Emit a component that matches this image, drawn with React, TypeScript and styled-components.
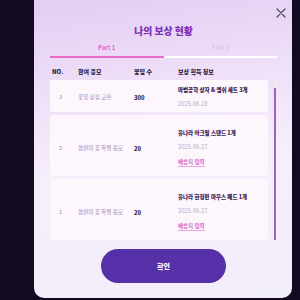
import { useEffect, useRef, useState } from 'react';
import styled, { createGlobalStyle } from 'styled-components';

const GlobalStyle = createGlobalStyle`
    * { box-sizing: border-box; }
    body {
        margin: 0;
        background: #120a21;
        font-family: "Noto Sans CJK KR", "Noto Sans", sans-serif;
    }
`;

const Page = styled.div`
    width: 300px;
    height: 300px;
    overflow: hidden;
`;

const Modal = styled.div`
    position: relative;
    width: 258px;
    height: 298px;
    margin-left: 34px;
    padding: 0 15px 0 16px;
    display: flex;
    flex-direction: column;
    border-radius: 0 0 10px 10px;
    background: linear-gradient(172deg, #e3cdf4 0%, #efe0f8 30%, #f7eefb 55%, #f2eef9 100%);
`;

const CloseButton = styled.button`
    position: absolute;
    top: 7px;
    right: 6px;
    width: 11px;
    height: 11px;
    padding: 0;
    border: none;
    background: none;
    display: flex;
    align-items: center;
    justify-content: center;
`;

const Title = styled.h2`
    margin: 26px 0 0;
    font-size: 9.8px;
    line-height: 10px;
    font-weight: 900;
    text-align: center;
    color: #7a30b6;
`;

const Tabs = styled.div`
    margin-top: 8px;
    display: flex;
`;

const Tab = styled.div<{ $active?: boolean }>`
    flex: 1;
    padding-bottom: 4px;
    font-size: 6px;
    line-height: 8px;
    font-weight: 700;
    text-align: center;
    color: ${(p) => (p.$active ? '#e063c4' : '#dcc4ee')};
    border-bottom: 2px solid ${(p) => (p.$active ? '#e86cc8' : '#ffffff')};
`;

const Grid = styled.div`
    display: grid;
    grid-template-columns: 28px 56px 44px 1fr;
    align-items: center;
`;

const HeaderRow = styled(Grid)`
    margin-top: 10px;
    font-size: 6px;
    line-height: 8px;
    font-weight: 900;
    color: #2d1e3e;
`;

const HeaderCell = styled.div<{ $first?: boolean }>`
    padding-left: ${(p) => (p.$first ? '2px' : '0')};
`;

const ListArea = styled.div`
    margin-top: 4px;
    height: 160px;
    display: flex;
    gap: 6px;
`;

const List = styled.div`
    width: 218px;
    height: 100%;
    overflow-y: scroll;
    scrollbar-width: none;
    display: flex;
    flex-direction: column;
    gap: 3px;

    &::-webkit-scrollbar {
        display: none;
    }
`;

const ScrollTrack = styled.div`
    position: relative;
    width: 2px;
    height: 100%;
    background: #f4ecdf;
`;

const ScrollThumb = styled.div`
    position: absolute;
    left: 0;
    width: 2px;
    background: #9a63c6;
`;

const Card = styled(Grid)<{ $tall?: boolean }>`
    flex-shrink: 0;
    padding: 14px 0 ${(p) => (p.$tall ? '9px' : '4px')};
    border-radius: 4px;
    background: #fdf7fd;
`;

const No = styled.div`
    padding-left: 9px;
    font-size: 5.5px;
    color: #9a88b0;
`;

const Entry = styled.div`
    font-size: 5.6px;
    color: #a48fbc;
`;

const Petals = styled.div`
    font-size: 5.8px;
    font-weight: 900;
    color: #3a2550;
`;

const Reward = styled.div`
    display: flex;
    flex-direction: column;
    align-items: flex-start;
`;

const RewardName = styled.div`
    font-size: 5.5px;
    line-height: 8px;
    font-weight: 900;
    color: #3b2050;
`;

const RewardDate = styled.div`
    margin-top: 6px;
    font-size: 5.9px;
    line-height: 8px;
    color: #b9abca;
`;

const AddressLink = styled.a`
    margin-top: 8px;
    font-size: 5.5px;
    line-height: 7px;
    font-weight: 700;
    color: #d462c2;
    border-bottom: 1px solid #e8a2dc;
    text-decoration: none;
`;

const ConfirmButton = styled.button`
    align-self: center;
    margin-top: 9px;
    width: 125px;
    height: 34px;
    border: none;
    border-radius: 17px;
    background: #5530a9;
    color: #ffffff;
    font-family: inherit;
    font-size: 7px;
    font-weight: 900;
`;

interface RewardItem {
    no: number;
    entry: string;
    petals: number;
    reward: string;
    date: string;
    needsAddress: boolean;
}

const rewards: RewardItem[] = [
    { no: 3, entry: '꽃잎 상점 교환', petals: 300, reward: '마법공학 상자 & 엠쉬 세트 3개', date: '2025.06.28', needsAddress: false },
    { no: 2, entry: '염원의 꽃 특별 응모', petals: 20, reward: '유나라 아크릴 스탠드 1개', date: '2025.06.27', needsAddress: true },
    { no: 1, entry: '염원의 꽃 특별 응모', petals: 20, reward: '유나라 한정판 마우스 패드 1개', date: '2025.06.27', needsAddress: true },
];

const App = () => {
    const listRef = useRef<HTMLDivElement>(null);
    const [thumb, setThumb] = useState({ top: 0, height: 160 });

    useEffect(() => {
        const el = listRef.current;
        if (!el) return;
        el.scrollTop = el.scrollHeight;
        const ratio = el.clientHeight / el.scrollHeight;
        setThumb({ top: el.scrollTop * ratio, height: el.clientHeight * ratio });
    }, []);

    return (
        <Page>
            <GlobalStyle />
            <Modal>
                <CloseButton aria-label="닫기">
                    <svg width="10" height="10" viewBox="0 0 10 10">
                        <path d="M1 1 L9 9 M9 1 L1 9" stroke="#4e4a5c" strokeWidth="1.2" strokeLinecap="round" />
                    </svg>
                </CloseButton>
                <Title>나의 보상 현황</Title>
                <Tabs>
                    <Tab $active>Part 1</Tab>
                    <Tab>Part 2</Tab>
                </Tabs>
                <HeaderRow>
                    <HeaderCell $first>NO.</HeaderCell>
                    <HeaderCell>참여 응모</HeaderCell>
                    <HeaderCell>꽃잎 수</HeaderCell>
                    <HeaderCell>보상 획득 정보</HeaderCell>
                </HeaderRow>
                <ListArea>
                    <List ref={listRef}>
                        {rewards.map((item) => (
                            <Card key={item.no} $tall={item.needsAddress}>
                                <No>{item.no}</No>
                                <Entry>{item.entry}</Entry>
                                <Petals>{item.petals}</Petals>
                                <Reward>
                                    <RewardName>{item.reward}</RewardName>
                                    <RewardDate>{item.date}</RewardDate>
                                    {item.needsAddress && <AddressLink>배송지 입력</AddressLink>}
                                </Reward>
                            </Card>
                        ))}
                    </List>
                    <ScrollTrack>
                        <ScrollThumb style={{ top: thumb.top, height: thumb.height }} />
                    </ScrollTrack>
                </ListArea>
                <ConfirmButton>확인</ConfirmButton>
            </Modal>
        </Page>
    );
};

export default App;
